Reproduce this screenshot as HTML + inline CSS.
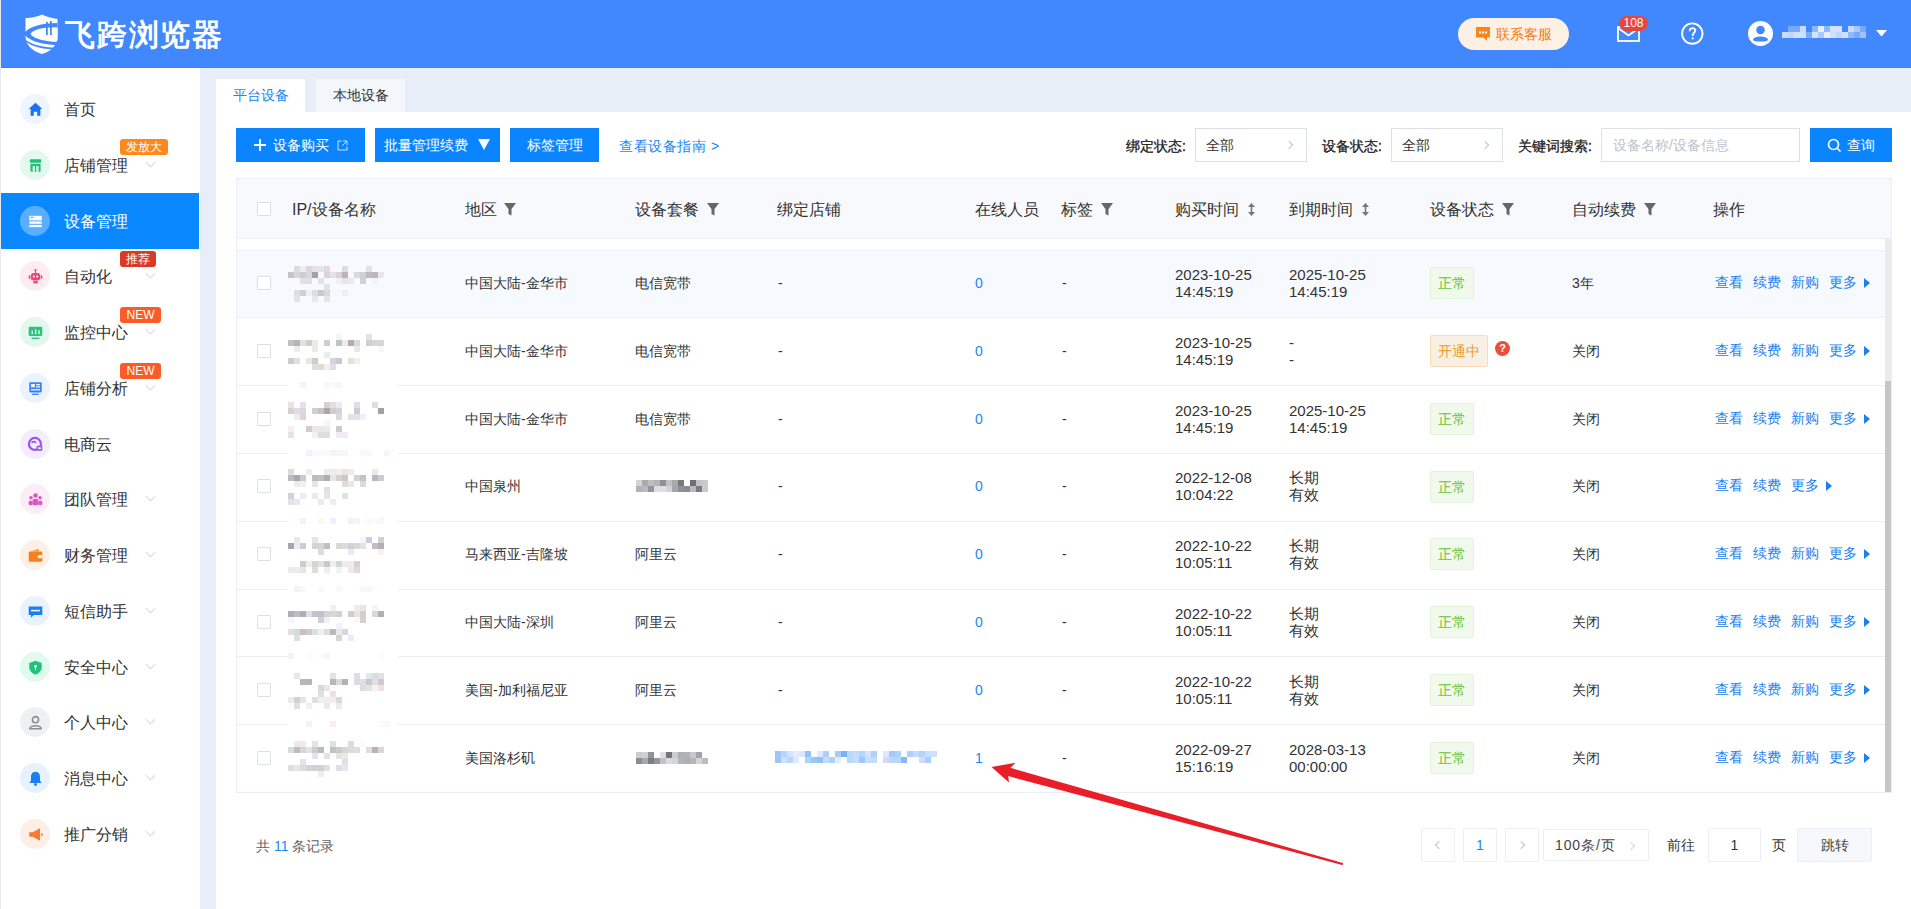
<!DOCTYPE html>
<html><head><meta charset="utf-8">
<style>
*{margin:0;padding:0;box-sizing:border-box}
html,body{width:1911px;height:909px;overflow:hidden;background:#fff;font-family:"Liberation Sans",sans-serif;color:#333}
.a{position:absolute}
#hdr{left:0;top:0;width:1911px;height:68px;background:#4188fe;border-bottom:1px solid #3a82f6}
#lb{left:0;top:0;width:1px;height:909px;background:#e6e8eb;z-index:5}
#side{left:0;top:68px;width:200px;height:841px;background:#fff}
#main{left:200px;top:68px;width:1711px;height:841px;background:#e8eef7}
#panel{left:216px;top:112px;width:1695px;height:797px;background:#fff}
.tab{top:79px;height:33px;font-size:14px;line-height:33px;text-align:center}
.mi{left:0;width:199px;height:56px}
.mi .ic{position:absolute;left:20px;top:13px;width:30px;height:30px;border-radius:50%}
.mi .lb{position:absolute;left:64px;top:1px;line-height:56px;font-size:16px;color:#333}
.mi .chev{position:absolute;left:147px;top:22px;width:7px;height:7px;border-right:1.4px solid #d6dae3;border-bottom:1.4px solid #d6dae3;transform:rotate(45deg)}
.bdg{position:absolute;height:16px;line-height:16px;font-size:12px;color:#fff;border-radius:3px;text-align:center}
.btn{height:34px;background:#0a84ff;color:#fff;font-size:14px;line-height:34px}
.t14{font-size:14px;line-height:20px;color:#333;white-space:nowrap}
.t16{font-size:16px;line-height:22px;color:#333;white-space:nowrap}
.dt{line-height:17px;font-size:15px}
.inp{height:34px;border:1px solid #dcdfe6;background:#fff;font-size:14px;line-height:32px;white-space:nowrap}
.chr{width:6px;height:6px;border-right:1px solid #c0c4cc;border-top:1px solid #c0c4cc;transform:rotate(45deg)}
.cb{width:14px;height:14px;border:1px solid #dcdfe6;background:#fff;border-radius:1px}
.tag{height:32px;border:1px solid;border-radius:2px;font-size:14px;line-height:30px;text-align:center}
.pb{top:828px;height:34px;border:1px solid #ebeef4;border-radius:2px;background:#fff;font-size:14px;line-height:32px;text-align:center}
</style></head><body>
<div id="lb" class="a"></div>
<div id="hdr" class="a"></div>
<div class="a" style="left:0;top:0;width:1911px;height:68px">
<svg class="a" style="left:24px;top:14px" width="35" height="41" viewBox="0 0 35 41">
<path d="M18 0.5 C14 2.5 7 4 1.5 4 V22 C1.5 31 8 37 18 40 C28 37 33.5 31 33.5 22 V5 C28 4 22 2.5 18 0.5 Z" fill="#fff"/>
<path d="M0 19.5 C4 13 18 9 33.5 9 V14 C22 12.5 9 15 6.5 20 C9 25 22 27.5 33.5 28 V31 C18 31 3 26 0 19.5 Z" fill="#4188fe"/>
<path d="M9 20 C12 16 22 13.5 33.5 13.5 V26.5 C22 26 12 24 9 20 Z" fill="#fff"/>
<rect x="22" y="8" width="1.8" height="13" fill="#4188fe"/><rect x="26" y="7" width="1.8" height="14" fill="#4188fe"/>
<path d="M-1 23 C4 30 18 33.5 33 33.5 L32 35.5 C16 35.5 3 31 -1 24 Z" fill="#4188fe"/>
</svg>
<div class="a" style="left:65px;top:14px;font-size:30px;line-height:42px;font-weight:bold;color:#fff;letter-spacing:1.8px">飞跨浏览器</div>
<div class="a" style="left:1458px;top:18px;width:111px;height:32px;border-radius:16px;background:#fdf0e4"></div>
<svg class="a" style="left:1475px;top:26px" width="16" height="16" viewBox="0 0 16 16"><path d="M1 1 H15 V11.5 H12 V15 L8.5 11.5 H1 Z" fill="#f7861c"/><rect x="4" y="5.5" width="2" height="2" fill="#fff"/><rect x="7" y="5.5" width="2" height="2" fill="#fff"/><rect x="10" y="5.5" width="2" height="2" fill="#fff"/></svg>
<div class="a" style="left:1496px;top:24px;font-size:14px;line-height:20px;color:#ef7d12">联系客服</div>
<svg class="a" style="left:1616px;top:23px" width="26" height="20" viewBox="0 0 26 20"><rect x="2" y="4" width="21" height="14" fill="none" stroke="#fff" stroke-width="1.8"/><path d="M2 5 L12.5 12.5 L23 5" fill="none" stroke="#fff" stroke-width="1.8"/></svg>
<div class="a" style="left:1619px;top:16px;width:29px;height:15px;border-radius:8px;background:#e8453c;color:#fff;font-size:12px;line-height:15px;text-align:center">108</div>
<svg class="a" style="left:1680px;top:21px" width="25" height="25" viewBox="0 0 25 25"><circle cx="12.3" cy="12.6" r="10.2" fill="none" stroke="#fff" stroke-width="1.9"/><path d="M9.6 10.2 C9.6 8 11 7.1 12.4 7.1 C14.1 7.1 15.3 8.2 15.3 9.7 C15.3 11.6 12.7 12 12.7 14.3 V14.9" fill="none" stroke="#fff" stroke-width="1.8"/><rect x="11.75" y="16.4" width="1.9" height="1.9" fill="#fff"/></svg>
<svg class="a" style="left:1747px;top:20px" width="27" height="27" viewBox="0 0 27 27"><circle cx="13.5" cy="13.5" r="12.5" fill="#fff"/><circle cx="13.5" cy="10" r="4.3" fill="#4188fe"/><path d="M6 19.5 C7 15.5 20 15.5 21 19.5 C21 21 19 21.5 13.5 21.5 C8 21.5 6 21 6 19.5 Z" fill="#4188fe"/></svg>
<div class="a" style="left:1782px;top:26px;width:6px;height:6px;background:transparent;box-shadow:0px 0px 0 rgb(140,185,255),6px 0px 0 rgb(120,170,250),12px 0px 0 rgb(120,170,250),18px 0px 0 rgb(201,220,255),30px 0px 0 rgb(140,185,255),36px 0px 0 rgb(230,238,255),42px 0px 0 rgb(140,185,255),48px 0px 0 rgb(211,226,255),54px 0px 0 rgb(211,226,255),66px 0px 0 rgb(201,220,255),72px 0px 0 rgb(169,200,255),78px 0px 0 rgb(120,170,250),0px 6px 0 rgb(201,220,255),6px 6px 0 rgb(192,214,255),12px 6px 0 rgb(208,224,255),18px 6px 0 rgb(208,224,255),24px 6px 0 rgb(120,170,250),30px 6px 0 rgb(211,226,255),36px 6px 0 rgb(169,200,255),42px 6px 0 rgb(230,238,255),48px 6px 0 rgb(208,224,255),54px 6px 0 rgb(192,214,255),60px 6px 0 rgb(208,224,255),66px 6px 0 rgb(140,185,255),72px 6px 0 rgb(120,170,250),78px 6px 0 rgb(159,194,255)"></div>
<svg class="a" style="left:1876px;top:30px" width="11" height="7" viewBox="0 0 11 7"><path d="M0 0 H11 L5.5 6.5 Z" fill="#fff"/></svg>
</div>

<div id="side" class="a"></div>
<div class="a mi" style="top:81px"><div class="ic" style="background:#edf5ff"><svg width="17" height="17" viewBox="0 0 15 15" style="position:absolute;left:6.5px;top:6.5px"><path d="M7.5 1.5 L1.5 7 H3.2 V13 H6 V9.5 H9 V13 H11.8 V7 H13.5 Z" fill="#1a73f0"/></svg></div><div class="lb">首页</div></div>
<div class="a mi" style="top:137px"><div class="ic" style="background:#e3f8ee"><svg width="17" height="17" viewBox="0 0 15 15" style="position:absolute;left:6.5px;top:6.5px"><rect x="2.5" y="2" width="10" height="3" rx="0.8" fill="#22bf78"/><rect x="3" y="6" width="9" height="7" rx="0.8" fill="#22bf78"/><rect x="5" y="8" width="2" height="5" fill="#e3f8ee"/><rect x="8.2" y="8" width="2" height="5" fill="#e3f8ee"/></svg></div><div class="lb">店铺管理</div><div class="chev"></div><div class="bdg" style="left:120px;top:2px;width:48px;background:#fb8a1b">发放大</div></div>
<div class="a mi" style="top:193px;background:#0a88ff"><div class="ic" style="background:#5aaeff"><svg width="17" height="17" viewBox="0 0 15 15" style="position:absolute;left:6.5px;top:6.5px"><rect x="2" y="2.5" width="11" height="4" fill="#fff"/><rect x="3.2" y="3.3" width="2.4" height="1.2" fill="#5aaeff"/><rect x="2" y="7.5" width="11" height="2" fill="#fff"/><rect x="2" y="10.5" width="11" height="2" fill="#fff"/></svg></div><div class="lb" style="color:#fff">设备管理</div></div>
<div class="a mi" style="top:248px"><div class="ic" style="background:#fdedf1"><svg width="17" height="17" viewBox="0 0 15 15" style="position:absolute;left:6.5px;top:6.5px"><rect x="3.5" y="4.5" width="8" height="6.5" rx="2" fill="#f0457a"/><rect x="1.5" y="6.5" width="1.5" height="3" fill="#f0457a"/><rect x="12" y="6.5" width="1.5" height="3" fill="#f0457a"/><rect x="7" y="1.5" width="1" height="3" fill="#f0457a"/><circle cx="7.5" cy="1.8" r="1" fill="#f0457a"/><circle cx="6" cy="7.5" r="0.9" fill="#fff"/><circle cx="9" cy="7.5" r="0.9" fill="#fff"/><rect x="5.5" y="11.5" width="4" height="2" fill="#f0457a"/></svg></div><div class="lb">自动化</div><div class="chev"></div><div class="bdg" style="left:120px;top:3px;width:36px;background:#d93a26">推荐</div></div>
<div class="a mi" style="top:304px"><div class="ic" style="background:#e2f8ee"><svg width="17" height="17" viewBox="0 0 15 15" style="position:absolute;left:6.5px;top:6.5px"><rect x="1.5" y="2.5" width="12" height="8" rx="1" fill="#2cc47c"/><rect x="4" y="6" width="1.3" height="3" fill="#e2f8ee"/><rect x="7" y="4.5" width="1.3" height="4.5" fill="#e2f8ee"/><rect x="10" y="5.5" width="1.3" height="3.5" fill="#e2f8ee"/><rect x="4" y="12" width="7" height="1.2" fill="#2cc47c"/></svg></div><div class="lb">监控中心</div><div class="chev"></div><div class="bdg" style="left:120px;top:3px;width:41px;background:#fb5b26">NEW</div></div>
<div class="a mi" style="top:360px"><div class="ic" style="background:#eaf3ff"><svg width="17" height="17" viewBox="0 0 15 15" style="position:absolute;left:6.5px;top:6.5px"><rect x="2" y="2" width="11" height="9" rx="1" fill="#3a7ff2"/><rect x="3.5" y="3.5" width="3.5" height="3" fill="#eaf3ff"/><rect x="8" y="3.5" width="3.5" height="1.2" fill="#eaf3ff"/><rect x="8" y="5.5" width="3.5" height="1.2" fill="#eaf3ff"/><rect x="3.5" y="8" width="8" height="1.2" fill="#eaf3ff"/><rect x="4.5" y="12" width="6" height="1.2" fill="#3a7ff2"/></svg></div><div class="lb">店铺分析</div><div class="chev"></div><div class="bdg" style="left:120px;top:3px;width:41px;background:#fb5b26">NEW</div></div>
<div class="a mi" style="top:416px"><div class="ic" style="background:#f3edfe"><svg width="17" height="17" viewBox="0 0 15 15" style="position:absolute;left:6.5px;top:6.5px"><circle cx="7" cy="7" r="5.3" fill="none" stroke="#9a55ef" stroke-width="2"/><path d="M4 6 Q6 4 8 6" stroke="#9a55ef" stroke-width="1.5" fill="none"/><rect x="8.5" y="8.5" width="5" height="4.5" rx="0.8" fill="#9a55ef"/><rect x="9.7" y="10" width="2.6" height="1.5" fill="#f3edfe"/></svg></div><div class="lb">电商云</div></div>
<div class="a mi" style="top:471px"><div class="ic" style="background:#fdedf9"><svg width="17" height="17" viewBox="0 0 15 15" style="position:absolute;left:6.5px;top:6.5px"><circle cx="7.5" cy="4" r="2" fill="#de55c6"/><circle cx="3.5" cy="6" r="1.6" fill="#de55c6"/><circle cx="11.5" cy="6" r="1.6" fill="#de55c6"/><rect x="5" y="7" width="5" height="5.5" rx="1.2" fill="#de55c6"/><rect x="1.5" y="8.5" width="3.5" height="4" rx="1" fill="#de55c6"/><rect x="10" y="8.5" width="3.5" height="4" rx="1" fill="#de55c6"/></svg></div><div class="lb">团队管理</div><div class="chev"></div></div>
<div class="a mi" style="top:527px"><div class="ic" style="background:#fff0e5"><svg width="17" height="17" viewBox="0 0 15 15" style="position:absolute;left:6.5px;top:6.5px"><path d="M3 4 L10 1.5 L11 4 Z" fill="#f9a23c"/><rect x="1.5" y="4" width="12" height="9" rx="1.2" fill="#f77f1c"/><rect x="9.5" y="7" width="4" height="3" rx="1" fill="#fff0e5"/></svg></div><div class="lb">财务管理</div><div class="chev"></div></div>
<div class="a mi" style="top:583px"><div class="ic" style="background:#e9f3ff"><svg width="17" height="17" viewBox="0 0 15 15" style="position:absolute;left:6.5px;top:6.5px"><path d="M1.5 3 H13.5 V10.5 H6 L3.5 13 V10.5 H1.5 Z" fill="#1a7ff0"/><rect x="3.5" y="6" width="8" height="1.4" fill="#e9f3ff"/></svg></div><div class="lb">短信助手</div><div class="chev"></div></div>
<div class="a mi" style="top:639px"><div class="ic" style="background:#e1faee"><svg width="17" height="17" viewBox="0 0 15 15" style="position:absolute;left:6.5px;top:6.5px"><path d="M7.5 1.5 L13 3.5 V7.5 C13 10.5 10.5 12.5 7.5 13.8 C4.5 12.5 2 10.5 2 7.5 V3.5 Z" fill="#1ec27a"/><circle cx="7.5" cy="6.5" r="1.3" fill="#e1faee"/><rect x="7" y="7" width="1" height="3" fill="#e1faee"/></svg></div><div class="lb">安全中心</div><div class="chev"></div></div>
<div class="a mi" style="top:694px"><div class="ic" style="background:#eff0f2"><svg width="17" height="17" viewBox="0 0 15 15" style="position:absolute;left:6.5px;top:6.5px"><circle cx="7.5" cy="5" r="2.7" fill="none" stroke="#8a8f98" stroke-width="1.4"/><path d="M2.5 13 C3 9.5 12 9.5 12.5 13 Z" fill="none" stroke="#8a8f98" stroke-width="1.4"/></svg></div><div class="lb">个人中心</div><div class="chev"></div></div>
<div class="a mi" style="top:750px"><div class="ic" style="background:#e8f2ff"><svg width="17" height="17" viewBox="0 0 15 15" style="position:absolute;left:6.5px;top:6.5px"><path d="M7.5 1.5 C4.5 1.5 3.5 4 3.5 6.5 V9.5 L2 11.5 H13 L11.5 9.5 V6.5 C11.5 4 10.5 1.5 7.5 1.5 Z" fill="#1a7ff0"/><circle cx="7.5" cy="12.8" r="1.3" fill="#1a7ff0"/></svg></div><div class="lb">消息中心</div><div class="chev"></div></div>
<div class="a mi" style="top:806px"><div class="ic" style="background:#ffeee5"><svg width="17" height="17" viewBox="0 0 15 15" style="position:absolute;left:6.5px;top:6.5px"><path d="M2 5.5 H5 L11.5 2 V13 L5 9.5 H2 Z" fill="#f77a2e"/><rect x="12.3" y="6.5" width="1.5" height="2" fill="#f77a2e"/></svg></div><div class="lb">推广分销</div><div class="chev"></div></div>
<div id="main" class="a"></div>
<div class="a tab" style="left:216px;width:89px;background:#fff;color:#1a87f5">平台设备</div>
<div class="a tab" style="left:316px;width:89px;background:#f3f7fc;color:#333">本地设备</div>
<div id="panel" class="a"></div>
<!--C-->
<div class="a btn" style="left:236px;top:128px;width:129px"><svg class="a" style="left:18px;top:11px" width="12" height="12" viewBox="0 0 12 12"><path d="M6 0 V12 M0 6 H12" stroke="#fff" stroke-width="1.8"/></svg><span class="a" style="left:37px;top:0">设备购买</span><svg class="a" style="left:101px;top:12px" width="11" height="11" viewBox="0 0 11 11"><path d="M4.5 1 H1 V10 H10 V6.5" fill="none" stroke="#cfe6ff" stroke-width="1"/><path d="M6 1 H10 V5 M10 1 L5 6" fill="none" stroke="#cfe6ff" stroke-width="1"/></svg></div>
<div class="a btn" style="left:375px;top:128px;width:125px"><span class="a" style="left:9px;top:0">批量管理续费</span><svg class="a" style="left:103px;top:11px" width="12" height="11" viewBox="0 0 12 11"><path d="M0 0 H12 L6 11 Z" fill="#fff"/></svg></div>
<div class="a btn" style="left:510px;top:128px;width:89px;text-align:center">标签管理</div>
<div class="a t14" style="left:619px;top:136px;color:#1a87f5;letter-spacing:0.6px">查看设备指南 &gt;</div>
<div class="a t14" style="left:1126px;top:136px;color:#222;-webkit-text-stroke:0.3px #222">绑定状态:</div>
<div class="a t14" style="left:1322px;top:136px;color:#222;-webkit-text-stroke:0.3px #222">设备状态:</div>
<div class="a t14" style="left:1518px;top:136px;color:#222;-webkit-text-stroke:0.3px #222">关键词搜索:</div>
<div class="a inp" style="left:1195px;top:128px;width:112px"><span class="a" style="left:10px;top:0;color:#333">全部</span><span class="a chr" style="left:90px;top:13px"></span></div>
<div class="a inp" style="left:1391px;top:128px;width:112px"><span class="a" style="left:10px;top:0;color:#333">全部</span><span class="a chr" style="left:90px;top:13px"></span></div>
<div class="a inp" style="left:1601px;top:128px;width:199px"><span class="a" style="left:11px;top:0;color:#c0c4cc">设备名称/设备信息</span></div>
<div class="a btn" style="left:1810px;top:128px;width:82px"><svg class="a" style="left:17px;top:10px" width="15" height="15" viewBox="0 0 15 15"><circle cx="6.5" cy="6.5" r="5" fill="none" stroke="#fff" stroke-width="1.6"/><path d="M10 10 L13.5 13.5" stroke="#fff" stroke-width="1.6"/></svg><span class="a" style="left:37px;top:0">查询</span></div>
<div class="a" style="left:236px;top:178px;width:1656px;height:615px;border:1px solid #ebeef5;background:#fff"></div>
<div class="a" style="left:237px;top:179px;width:1654px;height:60px;background:#f7f9fc;border-bottom:1px solid #ebeef5"></div>
<div class="a cb" style="left:257px;top:202px"></div>
<div class="a t16" style="left:292px;top:199px">IP/设备名称</div>
<div class="a t16" style="left:465px;top:199px">地区</div>
<svg class="a" style="left:504px;top:203px" width="12" height="13" viewBox="0 0 12 13"><path d="M0 0 H12 L7.5 6 V12.5 L4.5 11 V6 Z" fill="#666"/></svg>
<div class="a t16" style="left:635px;top:199px">设备套餐</div>
<svg class="a" style="left:707px;top:203px" width="12" height="13" viewBox="0 0 12 13"><path d="M0 0 H12 L7.5 6 V12.5 L4.5 11 V6 Z" fill="#666"/></svg>
<div class="a t16" style="left:777px;top:199px">绑定店铺</div>
<div class="a t16" style="left:975px;top:199px">在线人员</div>
<div class="a t16" style="left:1061px;top:199px">标签</div>
<svg class="a" style="left:1101px;top:203px" width="12" height="13" viewBox="0 0 12 13"><path d="M0 0 H12 L7.5 6 V12.5 L4.5 11 V6 Z" fill="#666"/></svg>
<div class="a t16" style="left:1175px;top:199px">购买时间</div>
<svg class="a" style="left:1248px;top:203px" width="7" height="13" viewBox="0 0 7 13"><path d="M3.5 0 L7 4 H4.3 V9 H7 L3.5 13 L0 9 H2.7 V4 H0 Z" fill="#777"/></svg>
<div class="a t16" style="left:1289px;top:199px">到期时间</div>
<svg class="a" style="left:1362px;top:203px" width="7" height="13" viewBox="0 0 7 13"><path d="M3.5 0 L7 4 H4.3 V9 H7 L3.5 13 L0 9 H2.7 V4 H0 Z" fill="#777"/></svg>
<div class="a t16" style="left:1430px;top:199px">设备状态</div>
<svg class="a" style="left:1502px;top:203px" width="12" height="13" viewBox="0 0 12 13"><path d="M0 0 H12 L7.5 6 V12.5 L4.5 11 V6 Z" fill="#666"/></svg>
<div class="a t16" style="left:1572px;top:199px">自动续费</div>
<svg class="a" style="left:1644px;top:203px" width="12" height="13" viewBox="0 0 12 13"><path d="M0 0 H12 L7.5 6 V12.5 L4.5 11 V6 Z" fill="#666"/></svg>
<div class="a t16" style="left:1713px;top:199px">操作</div>
<div class="a" style="left:237px;top:250px;width:1648px;height:1px;background:#ebeef5"></div>
<div class="a" style="left:1885px;top:239px;width:6px;height:553px;background:#ebebeb"></div>
<div class="a" style="left:1885px;top:381px;width:6px;height:411px;background:#c6c6c6"></div>
<div class="a" style="left:237px;top:251px;width:1648px;height:66px;background:#f6f9fe"></div>
<div class="a" style="left:237px;top:317px;width:1648px;height:1px;background:#ebeef5"></div>
<div class="a cb" style="left:257px;top:276px"></div>
<div class="a" style="left:282px;top:266px;width:6px;height:6px;box-shadow:12px 0px 0 rgba(204,210,205,0.68),18px 0px 0 rgba(237,231,233,0.72),24px 0px 0 rgba(221,210,205,0.91),30px 0px 0 rgba(231,213,231,0.79),36px 0px 0 rgba(214,221,217,0.64),42px 0px 0 rgba(224,210,223,0.91),48px 0px 0 rgba(254,246,242,0.69),60px 0px 0 rgba(208,209,219,0.71),84px 0px 0 rgba(217,211,228,0.65),6px 6px 0 rgba(156,161,166,0.58),12px 6px 0 rgba(219,206,208,0.88),18px 6px 0 rgba(194,195,195,0.80),24px 6px 0 rgba(204,203,210,0.74),30px 6px 0 rgba(160,161,169,1.00),42px 6px 0 rgba(204,193,207,0.68),48px 6px 0 rgba(208,210,216,0.56),54px 6px 0 rgba(209,195,199,0.72),60px 6px 0 rgba(174,169,169,0.85),72px 6px 0 rgba(199,194,194,0.59),78px 6px 0 rgba(173,180,191,0.59),84px 6px 0 rgba(175,170,173,0.80),90px 6px 0 rgba(176,169,180,0.84),96px 6px 0 rgba(227,221,227,0.70),18px 12px 0 rgba(221,209,210,0.67),24px 12px 0 rgba(212,196,211,0.55),36px 12px 0 rgba(219,209,227,0.63),54px 12px 0 rgba(239,232,240,0.66),60px 12px 0 rgba(223,222,220,0.76),66px 12px 0 rgba(238,229,244,0.96),78px 12px 0 rgba(207,207,210,0.95),90px 12px 0 rgba(244,233,248,0.61)"></div>
<div class="a" style="left:282px;top:284px;width:6px;height:6px;box-shadow:42px 0px 0 rgba(213,212,213,0.60),12px 6px 0 rgba(204,205,205,0.61),18px 6px 0 rgba(207,201,211,0.92),24px 6px 0 rgba(231,232,240,0.54),30px 6px 0 rgba(209,210,208,0.72),36px 6px 0 rgba(196,191,196,0.87),42px 6px 0 rgba(194,191,189,0.58),60px 6px 0 rgba(232,227,228,0.58),12px 12px 0 rgba(221,216,209,0.72),30px 12px 0 rgba(221,219,231,0.62),42px 12px 0 rgba(229,225,236,0.95)"></div>
<div class="a t14" style="left:465px;top:273px">中国大陆-金华市</div>
<div class="a t14" style="left:635px;top:273px">电信宽带</div>
<div class="a t14" style="left:778px;top:273px">-</div>
<div class="a t14" style="left:975px;top:273px;color:#1a87f5">0</div>
<div class="a t14" style="left:1062px;top:273px">-</div>
<div class="a t14 dt" style="left:1175px;top:266px">2023-10-25<br>14:45:19</div>
<div class="a t14 dt" style="left:1289px;top:266px">2025-10-25<br>14:45:19</div>
<div class="a tag" style="left:1430px;top:267px;width:44px;background:#f0f9eb;border-color:#e1f3d8;color:#67c23a">正常</div>
<div class="a t14" style="left:1572px;top:273px">3年</div>
<div class="a t14" style="left:1715px;top:272px;color:#1a7ff0">查看</div>
<div class="a t14" style="left:1753px;top:272px;color:#1a7ff0">续费</div>
<div class="a t14" style="left:1791px;top:272px;color:#1a7ff0">新购</div>
<div class="a t14" style="left:1829px;top:272px;color:#1a7ff0">更多</div>
<svg class="a" style="left:1864px;top:278px" width="6" height="10" viewBox="0 0 6 10"><path d="M0 0 L6 5 L0 10 Z" fill="#1a7ff0"/></svg>
<div class="a" style="left:237px;top:385px;width:1648px;height:1px;background:#ebeef5"></div>
<div class="a" style="left:288px;top:383px;width:110px;height:5px;background:#fff"></div>
<div class="a" style="left:282px;top:382px;width:6px;height:6px;box-shadow:18px 0px 0 rgba(250,242,234,0.94),42px 0px 0 rgba(249,243,237,0.78),48px 0px 0 rgba(255,248,255,0.89),54px 0px 0 rgba(241,243,246,0.64)"></div>
<div class="a cb" style="left:257px;top:344px"></div>
<div class="a" style="left:282px;top:334px;width:6px;height:6px;box-shadow:54px 0px 0 rgba(240,241,238,0.71),84px 0px 0 rgba(221,230,222,0.97),6px 6px 0 rgba(175,164,164,0.70),12px 6px 0 rgba(177,183,185,1.00),18px 6px 0 rgba(203,202,207,0.55),24px 6px 0 rgba(204,194,201,0.85),30px 6px 0 rgba(219,218,212,0.56),42px 6px 0 rgba(159,161,165,0.52),54px 6px 0 rgba(173,170,168,0.70),60px 6px 0 rgba(227,216,219,0.54),66px 6px 0 rgba(180,168,175,0.97),72px 6px 0 rgba(179,186,184,0.53),84px 6px 0 rgba(204,193,195,0.81),90px 6px 0 rgba(177,176,182,0.53),96px 6px 0 rgba(192,191,189,0.64),12px 12px 0 rgba(216,220,217,0.51),30px 12px 0 rgba(231,231,227,0.83),72px 12px 0 rgba(218,211,228,0.57),96px 12px 0 rgba(242,240,239,0.53)"></div>
<div class="a" style="left:282px;top:352px;width:6px;height:6px;box-shadow:42px 0px 0 rgba(232,236,243,0.98),6px 6px 0 rgba(189,185,181,0.74),12px 6px 0 rgba(198,199,191,0.55),24px 6px 0 rgba(217,222,216,0.65),30px 6px 0 rgba(202,192,188,0.83),48px 6px 0 rgba(214,201,208,0.86),54px 6px 0 rgba(197,191,194,0.87),66px 6px 0 rgba(228,221,212,0.91),72px 6px 0 rgba(231,225,224,0.52),30px 12px 0 rgba(217,210,207,0.74),36px 12px 0 rgba(219,211,205,0.83),42px 12px 0 rgba(237,241,231,0.92),48px 12px 0 rgba(219,223,232,0.99)"></div>
<div class="a t14" style="left:465px;top:341px">中国大陆-金华市</div>
<div class="a t14" style="left:635px;top:341px">电信宽带</div>
<div class="a t14" style="left:778px;top:341px">-</div>
<div class="a t14" style="left:975px;top:341px;color:#1a87f5">0</div>
<div class="a t14" style="left:1062px;top:341px">-</div>
<div class="a t14 dt" style="left:1175px;top:334px">2023-10-25<br>14:45:19</div>
<div class="a t14 dt" style="left:1289px;top:334px">-<br>-</div>
<div class="a tag" style="left:1430px;top:335px;width:58px;background:#f9f0e5;border-color:#fbdcb2;color:#ee9a1e">开通中</div>
<div class="a" style="left:1495px;top:341px;width:15px;height:15px;border-radius:50%;background:#e5513a;color:#fff;font-size:11px;line-height:15px;text-align:center;font-weight:bold">?</div>
<div class="a t14" style="left:1572px;top:341px">关闭</div>
<div class="a t14" style="left:1715px;top:340px;color:#1a7ff0">查看</div>
<div class="a t14" style="left:1753px;top:340px;color:#1a7ff0">续费</div>
<div class="a t14" style="left:1791px;top:340px;color:#1a7ff0">新购</div>
<div class="a t14" style="left:1829px;top:340px;color:#1a7ff0">更多</div>
<svg class="a" style="left:1864px;top:346px" width="6" height="10" viewBox="0 0 6 10"><path d="M0 0 L6 5 L0 10 Z" fill="#1a7ff0"/></svg>
<div class="a" style="left:237px;top:453px;width:1648px;height:1px;background:#ebeef5"></div>
<div class="a" style="left:288px;top:451px;width:110px;height:5px;background:#fff"></div>
<div class="a" style="left:282px;top:450px;width:6px;height:6px;box-shadow:24px 0px 0 rgba(244,238,254,0.87),30px 0px 0 rgba(245,241,255,0.53),36px 0px 0 rgba(245,253,248,0.84),42px 0px 0 rgba(249,247,254,0.73),48px 0px 0 rgba(246,244,242,0.97),54px 0px 0 rgba(241,247,253,1.00),60px 0px 0 rgba(237,244,237,0.57),78px 0px 0 rgba(255,246,245,0.85),84px 0px 0 rgba(251,239,244,0.50),102px 0px 0 rgba(247,239,246,0.66)"></div>
<div class="a cb" style="left:257px;top:412px"></div>
<div class="a" style="left:282px;top:402px;width:6px;height:6px;box-shadow:6px 0px 0 rgba(232,221,226,0.86),18px 0px 0 rgba(224,228,234,1.00),42px 0px 0 rgba(210,203,203,0.92),48px 0px 0 rgba(215,212,221,0.76),54px 0px 0 rgba(235,222,242,0.70),72px 0px 0 rgba(205,215,217,0.73),90px 0px 0 rgba(219,204,207,0.74),6px 6px 0 rgba(189,187,184,0.65),12px 6px 0 rgba(197,196,214,0.58),18px 6px 0 rgba(224,210,221,0.95),30px 6px 0 rgba(178,164,168,0.55),36px 6px 0 rgba(165,158,166,0.63),42px 6px 0 rgba(159,152,159,0.87),48px 6px 0 rgba(188,190,179,0.75),54px 6px 0 rgba(194,200,206,0.76),72px 6px 0 rgba(187,181,195,0.72),96px 6px 0 rgba(161,159,163,0.98),12px 12px 0 rgba(241,234,234,0.89),18px 12px 0 rgba(219,213,206,0.97),54px 12px 0 rgba(209,211,203,0.82),66px 12px 0 rgba(226,220,223,0.85),72px 12px 0 rgba(207,206,216,0.60),78px 12px 0 rgba(232,232,249,0.65)"></div>
<div class="a" style="left:282px;top:420px;width:6px;height:6px;box-shadow:42px 0px 0 rgba(248,236,243,0.61),6px 6px 0 rgba(237,229,236,0.60),24px 6px 0 rgba(207,195,201,0.88),30px 6px 0 rgba(215,212,217,0.55),36px 6px 0 rgba(223,221,233,0.71),42px 6px 0 rgba(221,223,218,0.61),54px 6px 0 rgba(183,184,194,0.72),6px 12px 0 rgba(208,208,216,0.60),30px 12px 0 rgba(234,228,237,0.58),36px 12px 0 rgba(218,221,229,0.98),42px 12px 0 rgba(224,217,221,0.91),54px 12px 0 rgba(235,234,246,0.96),60px 12px 0 rgba(237,222,242,0.71)"></div>
<div class="a t14" style="left:465px;top:409px">中国大陆-金华市</div>
<div class="a t14" style="left:635px;top:409px">电信宽带</div>
<div class="a t14" style="left:778px;top:409px">-</div>
<div class="a t14" style="left:975px;top:409px;color:#1a87f5">0</div>
<div class="a t14" style="left:1062px;top:409px">-</div>
<div class="a t14 dt" style="left:1175px;top:402px">2023-10-25<br>14:45:19</div>
<div class="a t14 dt" style="left:1289px;top:402px">2025-10-25<br>14:45:19</div>
<div class="a tag" style="left:1430px;top:403px;width:44px;background:#f0f9eb;border-color:#e1f3d8;color:#67c23a">正常</div>
<div class="a t14" style="left:1572px;top:409px">关闭</div>
<div class="a t14" style="left:1715px;top:408px;color:#1a7ff0">查看</div>
<div class="a t14" style="left:1753px;top:408px;color:#1a7ff0">续费</div>
<div class="a t14" style="left:1791px;top:408px;color:#1a7ff0">新购</div>
<div class="a t14" style="left:1829px;top:408px;color:#1a7ff0">更多</div>
<svg class="a" style="left:1864px;top:414px" width="6" height="10" viewBox="0 0 6 10"><path d="M0 0 L6 5 L0 10 Z" fill="#1a7ff0"/></svg>
<div class="a" style="left:237px;top:521px;width:1648px;height:1px;background:#ebeef5"></div>
<div class="a" style="left:288px;top:519px;width:110px;height:5px;background:#fff"></div>
<div class="a" style="left:282px;top:518px;width:6px;height:6px;box-shadow:18px 0px 0 rgba(246,233,233,0.63),36px 0px 0 rgba(246,245,237,0.63),48px 0px 0 rgba(245,236,255,0.96),66px 0px 0 rgba(238,242,249,0.98),72px 0px 0 rgba(249,243,240,0.96),78px 0px 0 rgba(253,255,248,0.80),84px 0px 0 rgba(251,242,255,0.54),90px 0px 0 rgba(249,247,255,0.53),96px 0px 0 rgba(255,245,245,0.99)"></div>
<div class="a cb" style="left:257px;top:479px"></div>
<div class="a" style="left:282px;top:469px;width:6px;height:6px;box-shadow:6px 0px 0 rgba(210,205,217,0.75),24px 0px 0 rgba(239,234,232,0.87),42px 0px 0 rgba(226,221,235,0.63),48px 0px 0 rgba(221,222,222,0.59),54px 0px 0 rgba(235,220,227,0.53),60px 0px 0 rgba(230,222,221,0.82),66px 0px 0 rgba(229,229,228,0.74),90px 0px 0 rgba(224,218,218,0.59),6px 6px 0 rgba(164,161,158,0.72),12px 6px 0 rgba(147,154,163,0.85),18px 6px 0 rgba(159,153,152,0.52),30px 6px 0 rgba(170,175,183,0.84),36px 6px 0 rgba(185,186,184,0.90),42px 6px 0 rgba(165,153,164,0.83),48px 6px 0 rgba(214,222,217,0.70),54px 6px 0 rgba(189,186,181,0.66),60px 6px 0 rgba(202,195,189,0.93),72px 6px 0 rgba(181,180,181,0.60),78px 6px 0 rgba(177,165,166,0.70),90px 6px 0 rgba(168,164,165,0.78),96px 6px 0 rgba(196,203,213,0.96),12px 12px 0 rgba(225,218,232,0.59),18px 12px 0 rgba(233,230,224,0.65),30px 12px 0 rgba(234,224,243,0.96),60px 12px 0 rgba(220,217,214,0.91),66px 12px 0 rgba(208,213,223,0.58),78px 12px 0 rgba(207,214,207,0.83)"></div>
<div class="a" style="left:282px;top:487px;width:6px;height:6px;box-shadow:42px 0px 0 rgba(219,211,211,0.72),6px 6px 0 rgba(187,188,196,0.68),18px 6px 0 rgba(222,221,241,0.57),30px 6px 0 rgba(241,226,226,0.88),42px 6px 0 rgba(233,229,231,1.00),60px 6px 0 rgba(219,222,215,0.84),6px 12px 0 rgba(229,223,231,0.95),12px 12px 0 rgba(232,232,244,0.98),36px 12px 0 rgba(223,225,227,0.70),48px 12px 0 rgba(231,221,227,0.56)"></div>
<div class="a t14" style="left:465px;top:476px">中国泉州</div>
<div class="a" style="left:630px;top:480px;width:6px;height:6px;box-shadow:6px 0px 0 rgba(200,200,205,0.76),12px 0px 0 rgba(120,120,130,0.63),18px 0px 0 rgba(180,180,185,0.87),24px 0px 0 rgba(180,180,185,1.00),30px 0px 0 rgba(90,90,100,0.67),36px 0px 0 rgba(150,150,160,0.59),42px 0px 0 rgba(120,120,130,0.65),48px 0px 0 rgba(90,90,100,0.82),60px 0px 0 rgba(90,90,100,0.87),66px 0px 0 rgba(150,150,160,0.57),72px 0px 0 rgba(180,180,185,0.71),6px 6px 0 rgba(120,120,130,0.57),12px 6px 0 rgba(120,120,130,0.51),18px 6px 0 rgba(90,90,100,0.65),24px 6px 0 rgba(200,200,205,0.61),30px 6px 0 rgba(200,200,205,0.57),36px 6px 0 rgba(180,180,185,0.58),42px 6px 0 rgba(150,150,160,0.85),48px 6px 0 rgba(120,120,130,0.82),54px 6px 0 rgba(90,90,100,0.70),60px 6px 0 rgba(120,120,130,0.53),66px 6px 0 rgba(90,90,100,0.80),72px 6px 0 rgba(200,200,205,0.97)"></div>
<div class="a t14" style="left:778px;top:476px">-</div>
<div class="a t14" style="left:975px;top:476px;color:#1a87f5">0</div>
<div class="a t14" style="left:1062px;top:476px">-</div>
<div class="a t14 dt" style="left:1175px;top:469px">2022-12-08<br>10:04:22</div>
<div class="a t14 dt" style="left:1289px;top:469px">长期<br>有效</div>
<div class="a tag" style="left:1430px;top:471px;width:44px;background:#f0f9eb;border-color:#e1f3d8;color:#67c23a">正常</div>
<div class="a t14" style="left:1572px;top:476px">关闭</div>
<div class="a t14" style="left:1715px;top:475px;color:#1a7ff0">查看</div>
<div class="a t14" style="left:1753px;top:475px;color:#1a7ff0">续费</div>
<div class="a t14" style="left:1791px;top:475px;color:#1a7ff0">更多</div>
<svg class="a" style="left:1826px;top:481px" width="6" height="10" viewBox="0 0 6 10"><path d="M0 0 L6 5 L0 10 Z" fill="#1a7ff0"/></svg>
<div class="a" style="left:237px;top:589px;width:1648px;height:1px;background:#ebeef5"></div>
<div class="a" style="left:288px;top:587px;width:110px;height:5px;background:#fff"></div>
<div class="a" style="left:282px;top:586px;width:6px;height:6px;box-shadow:12px 0px 0 rgba(233,232,249,0.51),18px 0px 0 rgba(235,246,237,0.51),36px 0px 0 rgba(251,244,255,0.75),54px 0px 0 rgba(238,240,255,0.52),78px 0px 0 rgba(252,239,255,0.73),84px 0px 0 rgba(241,236,253,0.52),90px 0px 0 rgba(251,254,244,0.63)"></div>
<div class="a cb" style="left:257px;top:547px"></div>
<div class="a" style="left:282px;top:537px;width:6px;height:6px;box-shadow:12px 0px 0 rgba(214,220,212,0.58),30px 0px 0 rgba(219,212,221,0.66),36px 0px 0 rgba(255,246,254,0.92),78px 0px 0 rgba(255,239,255,0.96),84px 0px 0 rgba(203,201,219,0.96),96px 0px 0 rgba(200,200,204,0.85),6px 6px 0 rgba(153,153,170,0.88),12px 6px 0 rgba(214,224,224,0.55),18px 6px 0 rgba(159,158,178,0.54),30px 6px 0 rgba(208,207,208,0.90),36px 6px 0 rgba(191,186,194,0.63),42px 6px 0 rgba(181,191,191,0.96),54px 6px 0 rgba(213,213,204,0.89),60px 6px 0 rgba(213,215,225,0.85),66px 6px 0 rgba(173,180,180,0.59),72px 6px 0 rgba(178,181,170,0.50),78px 6px 0 rgba(211,213,224,0.67),90px 6px 0 rgba(173,167,171,0.75),96px 6px 0 rgba(169,166,171,0.89),36px 12px 0 rgba(206,198,204,0.63),66px 12px 0 rgba(227,231,242,0.88),96px 12px 0 rgba(239,233,232,0.58)"></div>
<div class="a" style="left:282px;top:555px;width:6px;height:6px;box-shadow:18px 6px 0 rgba(206,204,211,0.98),24px 6px 0 rgba(228,227,228,0.60),30px 6px 0 rgba(197,199,197,0.72),36px 6px 0 rgba(222,223,225,0.94),42px 6px 0 rgba(191,191,192,0.85),48px 6px 0 rgba(228,226,219,0.57),54px 6px 0 rgba(204,215,211,0.95),60px 6px 0 rgba(233,226,235,0.71),66px 6px 0 rgba(243,228,230,0.82),72px 6px 0 rgba(207,209,202,0.95),6px 12px 0 rgba(229,228,237,0.74),12px 12px 0 rgba(241,235,230,0.95),18px 12px 0 rgba(211,206,202,0.52),30px 12px 0 rgba(227,216,214,0.92),42px 12px 0 rgba(245,229,249,0.90),54px 12px 0 rgba(234,238,233,0.70),66px 12px 0 rgba(222,225,229,0.69),72px 12px 0 rgba(216,209,223,0.85)"></div>
<div class="a t14" style="left:465px;top:544px">马来西亚-吉隆坡</div>
<div class="a t14" style="left:635px;top:544px">阿里云</div>
<div class="a t14" style="left:778px;top:544px">-</div>
<div class="a t14" style="left:975px;top:544px;color:#1a87f5">0</div>
<div class="a t14" style="left:1062px;top:544px">-</div>
<div class="a t14 dt" style="left:1175px;top:537px">2022-10-22<br>10:05:11</div>
<div class="a t14 dt" style="left:1289px;top:537px">长期<br>有效</div>
<div class="a tag" style="left:1430px;top:538px;width:44px;background:#f0f9eb;border-color:#e1f3d8;color:#67c23a">正常</div>
<div class="a t14" style="left:1572px;top:544px">关闭</div>
<div class="a t14" style="left:1715px;top:543px;color:#1a7ff0">查看</div>
<div class="a t14" style="left:1753px;top:543px;color:#1a7ff0">续费</div>
<div class="a t14" style="left:1791px;top:543px;color:#1a7ff0">新购</div>
<div class="a t14" style="left:1829px;top:543px;color:#1a7ff0">更多</div>
<svg class="a" style="left:1864px;top:549px" width="6" height="10" viewBox="0 0 6 10"><path d="M0 0 L6 5 L0 10 Z" fill="#1a7ff0"/></svg>
<div class="a" style="left:237px;top:656px;width:1648px;height:1px;background:#ebeef5"></div>
<div class="a" style="left:288px;top:654px;width:110px;height:5px;background:#fff"></div>
<div class="a" style="left:282px;top:653px;width:6px;height:6px;box-shadow:6px 0px 0 rgba(239,239,245,0.87),24px 0px 0 rgba(255,251,250,0.58),36px 0px 0 rgba(250,251,255,0.78),42px 0px 0 rgba(245,244,254,0.92),96px 0px 0 rgba(255,253,251,0.99)"></div>
<div class="a cb" style="left:257px;top:615px"></div>
<div class="a" style="left:282px;top:605px;width:6px;height:6px;box-shadow:48px 0px 0 rgba(226,226,234,0.53),72px 0px 0 rgba(239,221,221,0.60),78px 0px 0 rgba(225,226,220,0.79),90px 0px 0 rgba(238,239,231,0.60),6px 6px 0 rgba(172,167,175,0.92),12px 6px 0 rgba(187,172,185,0.84),18px 6px 0 rgba(167,165,166,0.91),24px 6px 0 rgba(216,222,229,0.95),30px 6px 0 rgba(190,177,192,0.80),36px 6px 0 rgba(174,171,182,0.75),42px 6px 0 rgba(214,209,216,1.00),48px 6px 0 rgba(178,177,187,0.51),54px 6px 0 rgba(189,194,201,0.74),66px 6px 0 rgba(201,202,200,0.93),72px 6px 0 rgba(220,212,210,0.64),78px 6px 0 rgba(193,176,185,0.65),90px 6px 0 rgba(216,216,219,0.99),96px 6px 0 rgba(169,162,169,0.86),6px 12px 0 rgba(236,246,235,0.70),36px 12px 0 rgba(202,203,215,0.88),42px 12px 0 rgba(243,235,238,0.81),72px 12px 0 rgba(248,244,239,0.55),78px 12px 0 rgba(209,208,199,0.96)"></div>
<div class="a" style="left:282px;top:623px;width:6px;height:6px;box-shadow:54px 0px 0 rgba(238,238,250,0.79),6px 6px 0 rgba(221,213,207,0.74),12px 6px 0 rgba(187,195,200,0.61),18px 6px 0 rgba(192,179,179,0.84),24px 6px 0 rgba(190,185,188,0.74),30px 6px 0 rgba(222,222,220,0.96),36px 6px 0 rgba(230,237,228,0.65),42px 6px 0 rgba(224,220,218,0.96),48px 6px 0 rgba(181,181,181,0.94),54px 6px 0 rgba(220,224,227,0.66),60px 6px 0 rgba(211,215,221,0.97),12px 12px 0 rgba(217,216,211,0.81),54px 12px 0 rgba(212,211,202,0.92),66px 12px 0 rgba(233,232,238,0.84)"></div>
<div class="a t14" style="left:465px;top:612px">中国大陆-深圳</div>
<div class="a t14" style="left:635px;top:612px">阿里云</div>
<div class="a t14" style="left:778px;top:612px">-</div>
<div class="a t14" style="left:975px;top:612px;color:#1a87f5">0</div>
<div class="a t14" style="left:1062px;top:612px">-</div>
<div class="a t14 dt" style="left:1175px;top:605px">2022-10-22<br>10:05:11</div>
<div class="a t14 dt" style="left:1289px;top:605px">长期<br>有效</div>
<div class="a tag" style="left:1430px;top:606px;width:44px;background:#f0f9eb;border-color:#e1f3d8;color:#67c23a">正常</div>
<div class="a t14" style="left:1572px;top:612px">关闭</div>
<div class="a t14" style="left:1715px;top:611px;color:#1a7ff0">查看</div>
<div class="a t14" style="left:1753px;top:611px;color:#1a7ff0">续费</div>
<div class="a t14" style="left:1791px;top:611px;color:#1a7ff0">新购</div>
<div class="a t14" style="left:1829px;top:611px;color:#1a7ff0">更多</div>
<svg class="a" style="left:1864px;top:617px" width="6" height="10" viewBox="0 0 6 10"><path d="M0 0 L6 5 L0 10 Z" fill="#1a7ff0"/></svg>
<div class="a" style="left:237px;top:724px;width:1648px;height:1px;background:#ebeef5"></div>
<div class="a" style="left:288px;top:722px;width:110px;height:5px;background:#fff"></div>
<div class="a" style="left:282px;top:721px;width:6px;height:6px;box-shadow:24px 0px 0 rgba(242,236,240,0.71),48px 0px 0 rgba(252,236,242,0.99),96px 0px 0 rgba(251,248,255,0.53),102px 0px 0 rgba(249,247,255,0.88)"></div>
<div class="a cb" style="left:257px;top:683px"></div>
<div class="a" style="left:282px;top:673px;width:6px;height:6px;box-shadow:12px 0px 0 rgba(223,224,233,0.79),48px 0px 0 rgba(213,213,220,0.68),72px 0px 0 rgba(216,206,204,0.69),84px 0px 0 rgba(219,224,227,0.76),90px 0px 0 rgba(207,210,216,0.79),96px 0px 0 rgba(229,217,230,0.88),18px 6px 0 rgba(158,151,153,0.69),24px 6px 0 rgba(165,153,162,0.74),48px 6px 0 rgba(161,163,169,0.78),54px 6px 0 rgba(220,210,222,0.92),60px 6px 0 rgba(181,176,175,0.97),72px 6px 0 rgba(214,214,222,0.89),78px 6px 0 rgba(206,206,209,0.66),84px 6px 0 rgba(178,178,187,0.72),90px 6px 0 rgba(214,209,212,0.70),96px 6px 0 rgba(197,199,199,0.90),36px 12px 0 rgba(210,217,219,0.94),42px 12px 0 rgba(225,228,222,0.81),78px 12px 0 rgba(209,210,222,0.78),84px 12px 0 rgba(211,209,216,0.62),90px 12px 0 rgba(239,235,235,0.63),96px 12px 0 rgba(238,224,227,0.99)"></div>
<div class="a" style="left:282px;top:691px;width:6px;height:6px;box-shadow:36px 0px 0 rgba(227,222,224,1.00),48px 0px 0 rgba(235,224,223,0.92),6px 6px 0 rgba(219,226,235,0.67),12px 6px 0 rgba(195,183,184,0.68),18px 6px 0 rgba(211,209,223,0.59),30px 6px 0 rgba(198,196,212,0.54),36px 6px 0 rgba(232,229,225,0.59),42px 6px 0 rgba(227,230,230,0.60),48px 6px 0 rgba(241,231,226,0.76),54px 6px 0 rgba(212,198,197,0.70),12px 12px 0 rgba(223,218,234,0.92),24px 12px 0 rgba(240,231,222,0.68),42px 12px 0 rgba(228,226,233,0.79),54px 12px 0 rgba(220,212,221,0.51)"></div>
<div class="a t14" style="left:465px;top:680px">美国-加利福尼亚</div>
<div class="a t14" style="left:635px;top:680px">阿里云</div>
<div class="a t14" style="left:778px;top:680px">-</div>
<div class="a t14" style="left:975px;top:680px;color:#1a87f5">0</div>
<div class="a t14" style="left:1062px;top:680px">-</div>
<div class="a t14 dt" style="left:1175px;top:673px">2022-10-22<br>10:05:11</div>
<div class="a t14 dt" style="left:1289px;top:673px">长期<br>有效</div>
<div class="a tag" style="left:1430px;top:674px;width:44px;background:#f0f9eb;border-color:#e1f3d8;color:#67c23a">正常</div>
<div class="a t14" style="left:1572px;top:680px">关闭</div>
<div class="a t14" style="left:1715px;top:679px;color:#1a7ff0">查看</div>
<div class="a t14" style="left:1753px;top:679px;color:#1a7ff0">续费</div>
<div class="a t14" style="left:1791px;top:679px;color:#1a7ff0">新购</div>
<div class="a t14" style="left:1829px;top:679px;color:#1a7ff0">更多</div>
<svg class="a" style="left:1864px;top:685px" width="6" height="10" viewBox="0 0 6 10"><path d="M0 0 L6 5 L0 10 Z" fill="#1a7ff0"/></svg>
<div class="a" style="left:237px;top:792px;width:1648px;height:1px;background:#ebeef5"></div>
<div class="a cb" style="left:257px;top:751px"></div>
<div class="a" style="left:282px;top:741px;width:6px;height:6px;box-shadow:12px 0px 0 rgba(216,217,233,0.59),18px 0px 0 rgba(232,215,215,0.55),30px 0px 0 rgba(218,207,216,0.62),48px 0px 0 rgba(211,214,213,0.73),66px 0px 0 rgba(218,208,223,0.80),78px 0px 0 rgba(249,246,247,0.58),6px 6px 0 rgba(212,217,212,0.89),12px 6px 0 rgba(184,185,187,0.92),18px 6px 0 rgba(197,193,186,0.66),24px 6px 0 rgba(196,195,209,0.51),30px 6px 0 rgba(169,172,180,0.60),36px 6px 0 rgba(176,178,184,0.89),48px 6px 0 rgba(150,159,168,0.63),54px 6px 0 rgba(195,190,179,0.81),60px 6px 0 rgba(210,216,217,0.98),66px 6px 0 rgba(194,193,188,0.56),72px 6px 0 rgba(217,210,223,0.80),84px 6px 0 rgba(213,213,222,0.79),90px 6px 0 rgba(172,159,169,0.80),96px 6px 0 rgba(199,201,204,0.73),30px 12px 0 rgba(214,216,225,0.69),42px 12px 0 rgba(221,219,226,0.78),54px 12px 0 rgba(216,207,207,0.58),60px 12px 0 rgba(230,226,217,0.76)"></div>
<div class="a" style="left:282px;top:759px;width:6px;height:6px;box-shadow:18px 0px 0 rgba(224,224,219,0.87),60px 0px 0 rgba(210,216,227,0.79),6px 6px 0 rgba(219,221,223,0.94),12px 6px 0 rgba(217,214,217,0.64),18px 6px 0 rgba(213,209,218,0.80),24px 6px 0 rgba(194,185,193,0.65),30px 6px 0 rgba(201,197,200,0.79),36px 6px 0 rgba(210,209,207,0.98),42px 6px 0 rgba(206,206,207,0.63),54px 6px 0 rgba(222,221,232,1.00),60px 6px 0 rgba(225,218,226,0.68),36px 12px 0 rgba(238,228,242,0.78)"></div>
<div class="a t14" style="left:465px;top:748px">美国洛杉矶</div>
<div class="a" style="left:630px;top:752px;width:6px;height:6px;box-shadow:6px 0px 0 rgba(200,200,205,0.95),12px 0px 0 rgba(200,200,205,0.87),18px 0px 0 rgba(90,90,100,0.66),30px 0px 0 rgba(200,200,205,0.59),36px 0px 0 rgba(90,90,100,0.84),42px 0px 0 rgba(200,200,205,0.94),48px 0px 0 rgba(150,150,160,0.76),54px 0px 0 rgba(150,150,160,0.75),60px 0px 0 rgba(150,150,160,0.53),66px 0px 0 rgba(120,120,130,0.68),6px 6px 0 rgba(120,120,130,0.85),12px 6px 0 rgba(120,120,130,0.65),18px 6px 0 rgba(120,120,130,0.96),24px 6px 0 rgba(120,120,130,0.79),30px 6px 0 rgba(150,150,160,0.59),36px 6px 0 rgba(200,200,205,0.63),42px 6px 0 rgba(200,200,205,0.76),48px 6px 0 rgba(150,150,160,0.71),54px 6px 0 rgba(150,150,160,0.76),60px 6px 0 rgba(120,120,130,0.55),66px 6px 0 rgba(200,200,205,0.75),72px 6px 0 rgba(180,180,185,0.90)"></div>
<div class="a" style="left:769px;top:751px;width:6px;height:6px;box-shadow:6px 0px 0 rgba(140,190,250,0.84),12px 0px 0 rgba(170,205,252,0.86),18px 0px 0 rgba(170,205,252,0.52),24px 0px 0 rgba(205,220,252,0.53),30px 0px 0 rgba(205,220,252,0.69),36px 0px 0 rgba(120,175,248,0.79),48px 0px 0 rgba(205,220,252,0.62),54px 0px 0 rgba(170,205,252,0.97),66px 0px 0 rgba(120,175,248,0.65),72px 0px 0 rgba(120,175,248,0.99),78px 0px 0 rgba(150,200,250,0.69),84px 0px 0 rgba(170,205,252,0.71),90px 0px 0 rgba(150,200,250,0.74),96px 0px 0 rgba(170,205,252,0.54),102px 0px 0 rgba(120,175,248,0.59),114px 0px 0 rgba(205,220,252,0.68),120px 0px 0 rgba(120,175,248,0.67),126px 0px 0 rgba(140,190,250,0.71),138px 0px 0 rgba(120,175,248,0.60),144px 0px 0 rgba(170,205,252,0.72),150px 0px 0 rgba(140,190,250,0.67),156px 0px 0 rgba(150,200,250,0.56),162px 0px 0 rgba(205,220,252,0.92),6px 6px 0 rgba(120,175,248,0.73),12px 6px 0 rgba(170,205,252,0.58),18px 6px 0 rgba(150,200,250,0.70),24px 6px 0 rgba(205,220,252,0.60),36px 6px 0 rgba(170,205,252,0.93),42px 6px 0 rgba(150,200,250,1.00),48px 6px 0 rgba(120,175,248,0.79),54px 6px 0 rgba(170,205,252,0.70),60px 6px 0 rgba(170,205,252,0.94),66px 6px 0 rgba(205,220,252,0.55),78px 6px 0 rgba(120,175,248,0.51),84px 6px 0 rgba(170,205,252,0.66),90px 6px 0 rgba(140,190,250,0.85),96px 6px 0 rgba(170,205,252,0.66),102px 6px 0 rgba(140,190,250,0.53),114px 6px 0 rgba(185,190,250,0.60),120px 6px 0 rgba(140,190,250,0.61),126px 6px 0 rgba(150,200,250,0.70),132px 6px 0 rgba(120,175,248,0.89),150px 6px 0 rgba(185,190,250,0.59),156px 6px 0 rgba(150,200,250,0.85)"></div>
<div class="a t14" style="left:975px;top:748px;color:#1a87f5">1</div>
<div class="a t14" style="left:1062px;top:748px">-</div>
<div class="a t14 dt" style="left:1175px;top:741px">2022-09-27<br>15:16:19</div>
<div class="a t14 dt" style="left:1289px;top:741px">2028-03-13<br>00:00:00</div>
<div class="a tag" style="left:1430px;top:742px;width:44px;background:#f0f9eb;border-color:#e1f3d8;color:#67c23a">正常</div>
<div class="a t14" style="left:1572px;top:748px">关闭</div>
<div class="a t14" style="left:1715px;top:747px;color:#1a7ff0">查看</div>
<div class="a t14" style="left:1753px;top:747px;color:#1a7ff0">续费</div>
<div class="a t14" style="left:1791px;top:747px;color:#1a7ff0">新购</div>
<div class="a t14" style="left:1829px;top:747px;color:#1a7ff0">更多</div>
<svg class="a" style="left:1864px;top:753px" width="6" height="10" viewBox="0 0 6 10"><path d="M0 0 L6 5 L0 10 Z" fill="#1a7ff0"/></svg>
<div class="a t14" style="left:256px;top:836px;color:#606266">共 <span style="color:#1a87f5">11</span> 条记录</div>
<div class="a pb" style="left:1421px;width:34px;"><span class="chr" style="position:absolute;left:14px;top:13px;transform:rotate(225deg)"></span></div>
<div class="a pb" style="left:1463px;width:34px;color:#1a87f5">1</div>
<div class="a pb" style="left:1505px;width:34px;"><span class="chr" style="position:absolute;left:12px;top:13px"></span></div>
<div class="a pb" style="left:1543px;width:106px;text-align:left;top:829px;height:32px;line-height:30px"><span style="position:absolute;left:11px;top:0;color:#444;letter-spacing:0.9px">100条/页</span><span class="chr" style="position:absolute;left:84px;top:13px;border-color:#d5d8de"></span></div>
<div class="a t14" style="left:1667px;top:835px">前往</div>
<div class="a pb" style="left:1708px;width:53px;color:#333">1</div>
<div class="a t14" style="left:1772px;top:835px">页</div>
<div class="a pb" style="left:1797px;width:75px;background:#f6f8fc;color:#444">跳转</div>
<svg class="a" style="left:0;top:0;z-index:10" width="1911" height="909" viewBox="0 0 1911 909"><path d="M991.5 767.0 L1015.5 762.7 L1010.5 767.8 L1342.8 863.0 L1343.3 864.2 L1342.2 865.0 L1008.2 776.1 L1009.0 782.5 Z" fill="#e81f28"/></svg>
<!--/C-->
</body></html>
